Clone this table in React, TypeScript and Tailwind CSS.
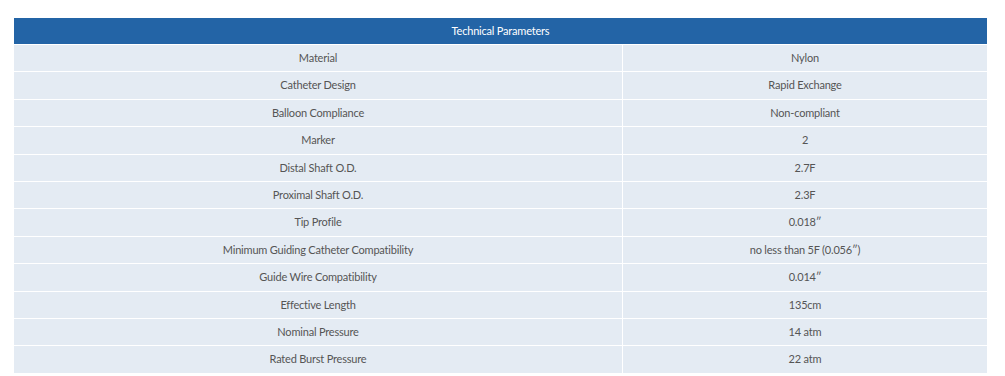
import React from "react";

const rows: [string, string][] = [
  ["Material", "Nylon"],
  ["Catheter Design", "Rapid Exchange"],
  ["Balloon Compliance", "Non-compliant"],
  ["Marker", "2"],
  ["Distal Shaft O.D.", "2.7F"],
  ["Proximal Shaft O.D.", "2.3F"],
  ["Tip Profile", "0.018\u2033"],
  ["Minimum Guiding Catheter Compatibility", "no less than 5F (0.056\u2033)"],
  ["Guide Wire Compatibility", "0.014\u2033"],
  ["Effective Length", "135cm"],
  ["Nominal Pressure", "14 atm"],
  ["Rated Burst Pressure", "22 atm"],
];

export default function App() {
  return (
    <div className="w-[1005px] h-[376px] bg-white pt-[18px] pl-[14px] font-['Lato','Liberation_Sans',sans-serif] text-[11px] tracking-[-0.2px]">
      <div className="w-[973px] flex flex-col">
        <div className="h-[26px] bg-[#2364a6] text-white flex items-center justify-center">
          Technical Parameters
        </div>
        {rows.map(([k, v]) => (
          <div key={k} className="h-[27.42px] border-t border-white flex text-[#555555] bg-[#e4ebf3]">
            <div className="w-[609px] border-r border-white flex items-center justify-center">{k}</div>
            <div className="flex-1 flex items-center justify-center">{v}</div>
          </div>
        ))}
      </div>
    </div>
  );
}
